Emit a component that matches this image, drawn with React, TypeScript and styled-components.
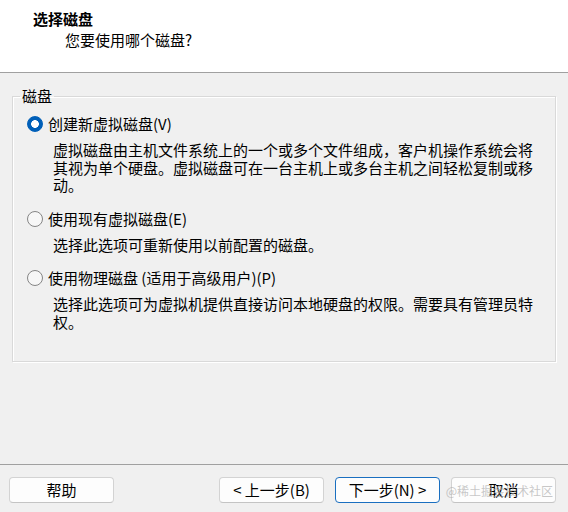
import styled, { createGlobalStyle } from "styled-components";

const GlobalStyle = createGlobalStyle`
  html, body {
    margin: 0;
    padding: 0;
    background: #f0f0f0;
  }
  * {
    box-sizing: border-box;
  }
`;

const FONT = `"Noto Sans CJK SC", "Noto Sans", sans-serif`;

// Dialog frame
const Window = styled.div`
  width: 568px;
  height: 512px;
  display: flex;
  flex-direction: column;
  background: #f0f0f0;
  font-family: ${FONT};
  font-size: 15px;
  color: #000;
  position: relative;
  overflow: hidden;
`;

// White banner at the top of the wizard page
const Header = styled.header`
  height: 73px;
  flex: none;
  background: #fff;
  border-bottom: 1px solid #a0a0a0;
  padding: 10px 0 0 33px;
`;

const Title = styled.div`
  font-weight: 700;
  line-height: 18px;
`;

const Subtitle = styled.div`
  margin: 3px 0 0 32px;
  line-height: 18px;
`;

const Body = styled.main`
  flex: 1;
  padding: 14px 12px 0 12px;
  border-bottom: 1px solid #a0a0a0;
`;

// Etched group box
const GroupBox = styled.fieldset`
  margin: 0;
  padding: 0;
  width: 544px;
  height: 275px;
  border: 1px solid #d9d9d9;
  box-shadow: inset 1px 1px 0 #fff, 1px 1px 0 #fff;
`;

const Legend = styled.legend`
  margin-left: 7px;
  padding: 0 2px;
  line-height: 18px;
`;

const Options = styled.div`
  display: flex;
  flex-direction: column;
  gap: 16px;
  padding: 10px 12px 0 15px;
`;

const Option = styled.div`
  display: flex;
  flex-direction: column;
  gap: 8px;
`;

const OptionLabel = styled.label`
  display: flex;
  align-items: center;
  gap: 5px;
  line-height: 18px;
`;

const Radio = styled.input.attrs({ type: "radio" })`
  appearance: none;
  margin: 0 0 0 -1px;
  width: 16px;
  height: 16px;
  border-radius: 50%;
  flex: none;
  border: 1px solid ${(p) => (p.checked ? "#005fb8" : "#858585")};
  background: ${(p) =>
    p.checked
      ? "radial-gradient(circle, #fff 0 3.6px, #005fb8 4.1px)"
      : "#f7f7f7"};
`;

const Description = styled.div`
  margin-left: 25px;
  line-height: 17.5px;
`;

const DescLine = styled.div`
  white-space: nowrap;
`;

const Footer = styled.footer`
  height: 47px;
  flex: none;
  display: flex;
  align-items: flex-start;
  gap: 11px;
  padding: 12px 12px 0 9px;
`;

const Button = styled.button<{ $default?: boolean }>`
  width: 105px;
  height: 26px;
  padding: 0;
  font-family: ${FONT};
  font-size: 15px;
  line-height: 18px;
  color: #000;
  background: #fdfdfd;
  border: 1px solid ${(p) => (p.$default ? "#1a6fc0" : "#d3d3d3")};
  border-bottom-color: ${(p) => (p.$default ? "#1a6fc0" : "#c4c4c4")};
  border-radius: 4px;
`;

const Spacer = styled.div`
  flex: 1;
`;

// Site watermark pasted over the bottom right corner
const Watermark = styled.div`
  position: absolute;
  right: 15px;
  bottom: 13px;
  font-size: 12px;
  line-height: 16px;
  color: rgba(175, 175, 175, 0.7);
  pointer-events: none;
`;

const options = [
  {
    label: "创建新虚拟磁盘(V)",
    lines: [
      "虚拟磁盘由主机文件系统上的一个或多个文件组成，客户机操作系统会将",
      "其视为单个硬盘。虚拟磁盘可在一台主机上或多台主机之间轻松复制或移",
      "动。",
    ],
    checked: true,
  },
  {
    label: "使用现有虚拟磁盘(E)",
    lines: ["选择此选项可重新使用以前配置的磁盘。"],
    checked: false,
  },
  {
    label: "使用物理磁盘 (适用于高级用户)(P)",
    lines: [
      "选择此选项可为虚拟机提供直接访问本地硬盘的权限。需要具有管理员特",
      "权。",
    ],
    checked: false,
  },
];

export default function App() {
  return (
    <>
      <GlobalStyle />
      <Window>
        <Header>
          <Title>选择磁盘</Title>
          <Subtitle>您要使用哪个磁盘?</Subtitle>
        </Header>
        <Body>
          <GroupBox>
            <Legend>磁盘</Legend>
            <Options>
              {options.map((o) => (
                <Option key={o.label}>
                  <OptionLabel>
                    <Radio name="disk" checked={o.checked} readOnly />
                    {o.label}
                  </OptionLabel>
                  <Description>
                    {o.lines.map((l) => (
                      <DescLine key={l}>{l}</DescLine>
                    ))}
                  </Description>
                </Option>
              ))}
            </Options>
          </GroupBox>
        </Body>
        <Footer>
          <Button>帮助</Button>
          <Spacer />
          <Button>&lt; 上一步(B)</Button>
          <Button $default>下一步(N) &gt;</Button>
          <Button>取消</Button>
        </Footer>
        <Watermark>@稀土掘金技术社区</Watermark>
      </Window>
    </>
  );
}
